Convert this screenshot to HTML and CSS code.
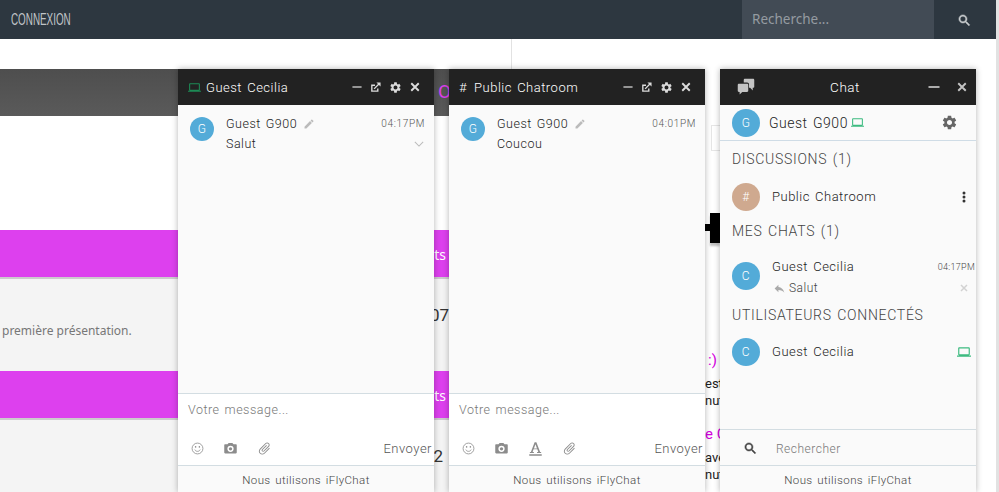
FILE: index.html
```html
<!DOCTYPE html>
<html lang="fr">
<head>
    <meta charset="UTF-8">
    <title>Connexion</title>
    <link rel="stylesheet" href="styles.css">
</head>
<body>
    <!-- icon sprite -->
    <svg class="sprite" xmlns="http://www.w3.org/2000/svg">
        <symbol id="i-gear" viewBox="0 0 24 24"><path d="M19.14 12.94c.04-.3.06-.61.06-.94 0-.32-.02-.64-.07-.94l2.03-1.58c.18-.14.23-.41.12-.61l-1.92-3.32c-.12-.22-.37-.29-.59-.22l-2.39.96c-.5-.38-1.03-.7-1.62-.94l-.36-2.54c-.04-.24-.24-.41-.48-.41h-3.84c-.24 0-.43.17-.47.41l-.36 2.54c-.59.24-1.13.57-1.62.94l-2.39-.96c-.22-.08-.47 0-.59.22L2.74 8.87c-.12.21-.08.47.12.61l2.03 1.58c-.05.3-.09.63-.09.94s.02.64.07.94l-2.03 1.58c-.18.14-.23.41-.12.61l1.92 3.32c.12.22.37.29.59.22l2.39-.96c.5.38 1.03.7 1.62.94l.36 2.54c.05.24.24.41.48.41h3.84c.24 0 .44-.17.47-.41l.36-2.54c.59-.24 1.13-.56 1.62-.94l2.39.96c.22.08.47 0 .59-.22l1.92-3.32c.12-.22.07-.47-.12-.61l-2.01-1.58zM12 15.6c-1.98 0-3.6-1.62-3.6-3.6s1.62-3.6 3.6-3.6 3.6 1.62 3.6 3.6-1.62 3.6-3.6 3.6z" fill="currentColor"/></symbol>
        <symbol id="i-laptop" viewBox="0 0 24 24"><path d="M20 18c1.1 0 1.99-.9 1.99-2L22 6c0-1.1-.9-2-2-2H4c-1.1 0-2 .9-2 2v10c0 1.1.9 2 2 2H0v2h24v-2h-4zM4 6h16v10H4V6z" fill="currentColor"/></symbol>
        <symbol id="i-search" viewBox="0 0 24 24"><path d="M15.5 14h-.79l-.28-.27C15.41 12.59 16 11.11 16 9.5 16 5.91 13.09 3 9.5 3S3 5.91 3 9.5 5.91 16 9.5 16c1.61 0 3.09-.59 4.23-1.57l.27.28v.79l5 4.99L20.49 19l-4.99-5zm-6 0C7.01 14 5 11.99 5 9.5S7.01 5 9.5 5 14 7.01 14 9.5 11.99 14 9.5 14z" fill="currentColor" stroke="currentColor" stroke-width=".8"/></symbol>
        <symbol id="i-camera" viewBox="0 0 24 24"><path fill-rule="evenodd" d="M9 3L7.2 5H3.5C2.7 5 2 5.7 2 6.5v12c0 .8.7 1.5 1.5 1.5h17c.8 0 1.5-.7 1.5-1.5v-12c0-.8-.7-1.5-1.5-1.5h-3.7L15 3H9zm3 14.5a5 5 0 1 1 0-10 5 5 0 0 1 0 10z" fill="currentColor"/><circle cx="12" cy="12.5" r="2.6" fill="currentColor"/></symbol>
        <symbol id="i-pencil" viewBox="0 0 24 24"><path d="M3 17.25V21h3.75L17.81 9.94l-3.75-3.75L3 17.25zM20.71 7.04c.39-.39.39-1.02 0-1.41l-2.34-2.34c-.39-.39-1.02-.39-1.41 0l-1.83 1.83 3.75 3.75 1.83-1.83z" fill="currentColor"/></symbol>
        <symbol id="i-reply" viewBox="0 0 24 24"><path d="M10 9V5l-7 7 7 7v-4.1c5 0 8.5 1.6 11 5.1-1-5-4-10-11-11z" fill="currentColor"/></symbol>
        <symbol id="i-clip" viewBox="0 0 24 24"><path transform="rotate(45 12 12)" d="M16.5 6v11.5c0 2.21-1.79 4-4 4s-4-1.79-4-4V5c0-1.38 1.12-2.5 2.5-2.5s2.5 1.12 2.5 2.5v10.5c0 .55-.45 1-1 1s-1-.45-1-1V6H10v9.5c0 1.38 1.12 2.5 2.5 2.5s2.5-1.12 2.5-2.5V5c0-2.21-1.79-4-4-4S7 2.79 7 5v12.5c0 3.04 2.46 5.5 5.5 5.5s5.5-2.46 5.5-5.5V6h-1.5z" fill="currentColor"/></symbol>
        <symbol id="i-smile" viewBox="0 0 24 24"><g fill="none" stroke="currentColor" stroke-width="1.5"><circle cx="12" cy="12" r="10"/><path d="M7 14c1 2.2 2.8 3.3 5 3.3s4-1.1 5-3.3"/></g><circle cx="8.5" cy="9" r="1.4" fill="currentColor"/><circle cx="15.5" cy="9" r="1.4" fill="currentColor"/></symbol>
        <symbol id="i-font" viewBox="0 0 24 24"><path d="M10.6 2h2.8l6 15.5h1.6V19h-6.5v-1.500h2l-1.500-4.200H8.900l-1.500 4.200h2V19H3v-1.500h1.600L10.600 2zm1.300 3.300L9.500 11.800h4.900L11.900 5.300zM2 21h20v2.500H2z" fill="currentColor"/></symbol>
        <symbol id="i-min" viewBox="0 0 24 24"><path d="M1 12h22" fill="none" stroke="currentColor" stroke-width="3"/></symbol>
        <symbol id="i-close" viewBox="0 0 24 24"><path d="M3 3l18 18M21 3L3 21" fill="none" stroke="currentColor" stroke-width="4.500"/></symbol>
        <symbol id="i-popout" viewBox="0 0 24 24"><path d="M17 14v6H4V7h7" fill="none" stroke="currentColor" stroke-width="3"/><path d="M9 15L20 4" fill="none" stroke="currentColor" stroke-width="3"/><path d="M14 1h9v9z" fill="currentColor"/></symbol>
        <symbol id="i-chevron" viewBox="0 0 24 24"><path d="M2 7l10 10L22 7" fill="none" stroke="currentColor" stroke-width="2.500"/></symbol>
        <symbol id="i-dots" viewBox="0 0 24 24"><circle cx="12" cy="4" r="3" fill="currentColor"/><circle cx="12" cy="12" r="3" fill="currentColor"/><circle cx="12" cy="20" r="3" fill="currentColor"/></symbol>
        <symbol id="i-chats" viewBox="0 0 24 24"><path d="M9 2.500c0-.8.7-1.500 1.500-1.500h11c.8 0 1.500.7 1.500 1.500v9c0 .8-.7 1.500-1.500 1.500H21v3.500L17.500 13H16V8.500C16 7 15 6 13.500 6H9V2.500z" fill="currentColor"/><path d="M1 9c0-.8.7-1.500 1.500-1.500h11c.8 0 1.500.7 1.500 1.500v8c0 .8-.7 1.500-1.500 1.500H7L3.500 22v-3.500h-1C1.700 18.500 1 17.800 1 17V9z" fill="currentColor"/></symbol>
    </svg>

    <div class="page">
        <div class="navbar">
            <a class="nav-link">CONNEXION</a>
            <div class="nav-search">
                <div class="search-field">Recherche...</div>
                <div class="search-btn"><svg class="ico-15"><use href="#i-search"/></svg></div>
            </div>
        </div>

        <div class="content">
            <div class="col-left">
                <div class="title-bar"><span class="title-text">O</span></div>
                <div class="section-head">Sujets</div>
                <div class="section-body">
                    <span class="intro">première présentation.</span>
                    <span class="count">07</span>
                </div>
                <div class="section-head">Sujets</div>
                <div class="section-body section-last">
                    <span class="count count-b">2</span>
                </div>
            </div>
            <div class="col-right">
                <div class="feed">
                    <div class="small-box"></div>
                    <div class="cross"></div>
                    <div class="feed-name feed-first">:)</div>
                    <div class="feed-line feed-gap">est</div>
                    <div class="feed-line">nut</div>
                    <div class="feed-name feed-second">e C</div>
                    <div class="feed-line feed-gap">ave</div>
                    <div class="feed-line">nut</div>
                </div>
            </div>
        </div>
    </div>
    <div class="scrollbar"></div>

    <!-- chat window: Guest Cecilia -->
    <div class="chat-win win-a">
        <div class="chat-head">
            <svg class="ico-13 online-dark"><use href="#i-laptop"/></svg>
            <span class="chat-title">Guest Cecilia</span>
            <div class="head-tools">
                <svg class="ico-10"><use href="#i-min"/></svg>
                <svg class="ico-11"><use href="#i-popout"/></svg>
                <svg class="ico-13"><use href="#i-gear"/></svg>
                <svg class="ico-10"><use href="#i-close"/></svg>
            </div>
        </div>
        <div class="chat-body">
            <div class="msg">
                <div class="avatar av-24">G</div>
                <div class="msg-main">
                    <div class="msg-top">
                        <span class="msg-name">Guest G900</span>
                        <svg class="ico-12 pencil"><use href="#i-pencil"/></svg>
                        <span class="msg-time">04:17PM</span>
                    </div>
                    <div class="msg-bottom">
                        <span class="msg-text">Salut</span>
                        <svg class="ico-10 chevron"><use href="#i-chevron"/></svg>
                    </div>
                </div>
            </div>
        </div>
        <div class="chat-input">
            <div class="placeholder">Votre message...</div>
            <div class="input-tools">
                <svg class="ico-13"><use href="#i-smile"/></svg>
                <svg class="ico-15"><use href="#i-camera"/></svg>
                <svg class="ico-15"><use href="#i-clip"/></svg>
                <span class="send">Envoyer</span>
            </div>
        </div>
        <div class="chat-foot">Nous utilisons iFlyChat</div>
    </div>

    <!-- chat window: Public Chatroom -->
    <div class="chat-win win-b">
        <div class="chat-head">
            <span class="hash">#</span>
            <span class="chat-title">Public Chatroom</span>
            <div class="head-tools">
                <svg class="ico-10"><use href="#i-min"/></svg>
                <svg class="ico-11"><use href="#i-popout"/></svg>
                <svg class="ico-13"><use href="#i-gear"/></svg>
                <svg class="ico-10"><use href="#i-close"/></svg>
            </div>
        </div>
        <div class="chat-body">
            <div class="msg">
                <div class="avatar av-24">G</div>
                <div class="msg-main">
                    <div class="msg-top">
                        <span class="msg-name">Guest G900</span>
                        <svg class="ico-12 pencil"><use href="#i-pencil"/></svg>
                        <span class="msg-time">04:01PM</span>
                    </div>
                    <div class="msg-bottom">
                        <span class="msg-text">Coucou</span>
                    </div>
                </div>
            </div>
        </div>
        <div class="chat-input">
            <div class="placeholder">Votre message...</div>
            <div class="input-tools">
                <svg class="ico-13"><use href="#i-smile"/></svg>
                <svg class="ico-15"><use href="#i-camera"/></svg>
                <svg class="ico-15"><use href="#i-font"/></svg>
                <svg class="ico-15"><use href="#i-clip"/></svg>
                <span class="send">Envoyer</span>
            </div>
        </div>
        <div class="chat-foot">Nous utilisons iFlyChat</div>
    </div>

    <!-- main chat list -->
    <div class="chat-win win-c">
        <div class="chat-head list-head">
            <svg class="ico-18"><use href="#i-chats"/></svg>
            <span class="list-title">Chat</span>
            <svg class="ico-12 list-min"><use href="#i-min"/></svg>
            <svg class="ico-10 list-close"><use href="#i-close"/></svg>
        </div>
        <div class="list-body">
            <div class="me-row">
                <div class="avatar av-28">G</div>
                <span class="me-name">Guest G900</span>
                <svg class="ico-13 online"><use href="#i-laptop"/></svg>
                <svg class="ico-17 me-gear"><use href="#i-gear"/></svg>
            </div>
            <div class="list-label label-first">DISCUSSIONS (1)</div>
            <div class="list-row row-room">
                <div class="avatar av-28 av-room">#</div>
                <span class="row-name">Public Chatroom</span>
                <svg class="ico-12 dots"><use href="#i-dots"/></svg>
            </div>
            <div class="list-label label-chats">MES CHATS (1)</div>
            <div class="list-row row-chat">
                <div class="avatar av-28">C</div>
                <div class="row-main">
                    <div class="row-top">
                        <span class="row-name">Guest Cecilia</span>
                        <span class="row-time">04:17PM</span>
                    </div>
                    <div class="row-bottom">
                        <svg class="ico-13 reply"><use href="#i-reply"/></svg>
                        <span class="row-last">Salut</span>
                        <svg class="ico-8 row-x"><use href="#i-close"/></svg>
                    </div>
                </div>
            </div>
            <div class="list-label label-users">UTILISATEURS CONNECTÉS</div>
            <div class="list-row row-user">
                <div class="avatar av-28">C</div>
                <span class="row-name">Guest Cecilia</span>
                <svg class="ico-14 online user-online"><use href="#i-laptop"/></svg>
            </div>
        </div>
        <div class="list-search">
            <svg class="ico-15 search-ico"><use href="#i-search"/></svg>
            <span class="search-hint">Rechercher</span>
        </div>
        <div class="chat-foot">Nous utilisons iFlyChat</div>
    </div>
</body>
</html>
```

FILE: styles.css
```css
* {
    box-sizing: border-box;
}

html, body {
    margin: 0;
    height: 492px;
    overflow: hidden;
}

body {
    display: flex;
    font-family: Roboto, "Liberation Sans", sans-serif;
    background-color: #fff;
}

.sprite {
    display: none;
}

svg {
    display: block;
    flex: none;
}

.ico-8 { width: 8px; height: 8px; }
.ico-10 { width: 10px; height: 10px; }
.ico-11 { width: 11px; height: 11px; }
.ico-12 { width: 12px; height: 12px; }
.ico-13 { width: 13px; height: 13px; }
.ico-14 { width: 14px; height: 14px; }
.ico-15 { width: 15px; height: 15px; }
.ico-17 { width: 17px; height: 17px; }
.ico-18 { width: 18px; height: 18px; }

.page {
    flex: 1;
    min-width: 0;
}

.scrollbar {
    width: 3px;
    background-color: #e2e2e2;
}

/* navbar */
.navbar {
    display: flex;
    justify-content: space-between;
    height: 39px;
    background-color: #2d3740;
}

.nav-link {
    display: block;
    margin-left: 11px;
    line-height: 39px;
    font-family: "Liberation Sans", sans-serif;
    font-size: 17px;
    color: #c0c4c8;
    transform: scaleX(.58);
    transform-origin: left center;
}

.nav-search {
    display: flex;
}

.search-field {
    width: 192px;
    padding-left: 10px;
    line-height: 39px;
    font-family: "Noto Sans", sans-serif;
    font-size: 13.5px;
    color: #959ba1;
    background-color: #424b55;
}

.search-btn {
    display: flex;
    align-items: center;
    padding: 2px 0 0 23px;
    width: 62px;
    color: #c9ccce;
}

/* page behind the chat windows */
.content {
    display: flex;
    height: 453px;
}

.col-left {
    flex: none;
    width: 460px;
    padding-top: 30px;
}

.title-bar {
    height: 47px;
    margin-bottom: 114px;
    padding: 13px 0 0 438px;
    background: linear-gradient(#4e4e4e, #5a5a5a);
}

.title-text {
    font-size: 19px;
    line-height: 20px;
    color: #dd40ee;
}

.section-head {
    height: 49px;
    padding: 15px 14px 0 0;
    text-align: right;
    font-family: "Noto Sans", sans-serif;
    font-size: 14px;
    color: #fff;
    background-color: #dd40ee;
    border-bottom: 2px solid #ccc;
}

.section-body {
    display: flex;
    justify-content: space-between;
    align-items: flex-start;
    height: 92px;
    padding: 26px 11px 0 2px;
    background-color: #f4f4f4;
}

.section-last {
    height: 80px;
    justify-content: flex-end;
    padding: 26px 17px 0 0;
}

.intro {
    margin-top: 16px;
    font-family: "Noto Sans", sans-serif;
    font-size: 12px;
    line-height: 20px;
    color: #777;
}

.count {
    font-size: 17px;
    line-height: 20px;
    color: #333;
}

.col-right {
    flex: 1;
    margin-left: 51px;
    border-left: 1px solid #e2e2e2;
    height: 30px;
}

.feed {
    width: 200px;
    margin-left: 193px;
    padding-top: 86px;
}

.small-box {
    width: 100px;
    height: 26px;
    margin-left: 6px;
    border: 1px solid #e6e6e6;
}

.cross {
    position: relative;
    width: 10px;
    height: 30px;
    margin: 62px 0 0 5px;
    background-color: #000;
    box-shadow: 0 3px 2px rgba(0, 0, 0, .25);
}

.cross::before {
    content: "";
    position: absolute;
    top: 11px;
    left: -5px;
    width: 5px;
    height: 7px;
    background-color: #000;
}

.feed-name {
    font-size: 15px;
    line-height: 18px;
    color: #d400e0;
}

.feed-first {
    margin-top: 108px;
    padding-left: 3px;
}

.feed-second {
    margin-top: 16px;
}

.feed-line {
    font-size: 13px;
    line-height: 17px;
    color: #222;
}

.feed-gap {
    margin-top: 6px;
}

/* chat windows */
.chat-win {
    position: absolute;
    top: 69px;
    display: flex;
    flex-direction: column;
    width: 256px;
    height: 423px;
    background-color: #fafafa;
    box-shadow: 0 0 6px rgba(0, 0, 0, .3);
    font-weight: 300;
    letter-spacing: .5px;
    word-spacing: 1.5px;
}

.win-a { left: 178px; }
.win-b { left: 449px; }
.win-c { left: 720px; }

.chat-head {
    display: flex;
    align-items: center;
    flex: none;
    height: 36px;
    padding: 0 14px 0 10px;
    color: #dcdcdc;
    background-color: #222;
}

.online-dark {
    color: #1d8a55;
}

.online {
    color: #3dbb80;
}

.hash {
    font-size: 13px;
    margin-right: 7px;
    color: #fff;
}

.chat-title {
    margin-left: 5px;
    font-size: 13px;
    color: #fff;
}

.win-b .chat-title {
    margin-left: 0;
}

.head-tools {
    display: flex;
    align-items: center;
    gap: 8px;
    margin-left: auto;
}

.chat-body {
    flex: 1;
    padding: 12px 9px 0 12px;
}

.msg {
    display: flex;
}

.avatar {
    flex: none;
    display: flex;
    align-items: center;
    justify-content: center;
    border-radius: 50%;
    color: #fff;
    background-color: #53abd8;
}

.av-24 {
    width: 24px;
    height: 24px;
    font-size: 12px;
}

.av-28 {
    width: 28px;
    height: 28px;
    font-size: 12px;
}

.av-room {
    background-color: #cfa98f;
}

.msg-main {
    flex: 1;
    margin-left: 12px;
}

.msg-top,
.msg-bottom {
    display: flex;
    align-items: center;
}

.msg-top {
    height: 13px;
}

.msg-bottom {
    height: 13px;
    margin-top: 7px;
}

.msg-name,
.msg-text {
    font-size: 12.500px;
    color: #222;
}

.pencil {
    margin-left: 6px;
    color: #bbb;
}

.msg-time {
    margin-left: auto;
    font-size: 10px;
    letter-spacing: .65px;
    color: #555;
}

.chevron {
    margin-left: auto;
    margin-right: 1px;
    color: #bbb;
}

.chat-input {
    flex: none;
    height: 72px;
    background-color: #fff;
    border-top: 1px solid #d3dde2;
}

.placeholder {
    padding: 8px 0 0 10px;
    font-size: 12.500px;
    line-height: 15px;
    color: #777;
}

.input-tools {
    display: flex;
    align-items: center;
    gap: 19px;
    height: 16px;
    margin-top: 23px;
    padding: 0 2px 0 13px;
    color: #8c8c8c;
}

.send {
    margin-left: auto;
    font-size: 13px;
    color: #555;
}

.chat-foot {
    flex: none;
    height: 27px;
    line-height: 29px;
    text-align: center;
    font-size: 11.500px;
    letter-spacing: .4px;
    color: #444;
    border-top: 1px solid #d3dde2;
}

/* chat list */
.list-head {
    padding: 0 9px 0 17px;
    color: #c4c4c4;
}

.list-title {
    position: absolute;
    left: 0;
    right: 6px;
    text-align: center;
    font-size: 13.500px;
    color: #fff;
}

.list-min {
    margin-left: auto;
    color: #dcdcdc;
}

.list-close {
    margin-left: 17px;
}

.list-body {
    flex: 1;
}

.me-row {
    display: flex;
    align-items: center;
    height: 36px;
    padding: 0 18px 0 12px;
    border-bottom: 1px solid #cfdce6;
}

.me-name {
    margin: 0 3px 0 9px;
    font-size: 14px;
    color: #222;
}

.me-gear {
    margin-left: auto;
    color: #666;
}

.list-label {
    padding-left: 12px;
    font-size: 14px;
    line-height: 18px;
    letter-spacing: .7px;
    color: #444;
}

.label-first { margin-top: 9px; }
.label-chats { margin-top: 11px; }
.label-users { margin-top: 11px; }

.list-row {
    display: flex;
    align-items: center;
    padding: 0 0 0 12px;
}

.row-room {
    height: 28px;
    margin-top: 15px;
    padding-right: 6px;
}

.row-chat {
    margin-top: 16px;
}

.row-user {
    height: 28px;
    margin-top: 14px;
    padding-right: 5px;
}

.row-name {
    margin: 0 0 2px 12px;
    font-size: 13px;
    color: #222;
}

.dots {
    margin-left: auto;
    color: #333;
}

.user-online {
    margin-left: auto;
}

.row-main {
    flex: 1;
    margin-left: 12px;
    padding-top: 3px;
}

.row-main .row-name {
    margin: 0;
}

.row-top,
.row-bottom {
    display: flex;
    align-items: center;
}

.row-top {
    height: 15px;
    padding-right: 1px;
}

.row-bottom {
    height: 14px;
    margin-top: 7px;
    padding: 0 8px 0 1px;
}

.row-time {
    margin-left: auto;
    font-size: 9px;
    letter-spacing: .3px;
    color: #444;
}

.reply {
    color: #aaa;
}

.row-last {
    margin-left: 3px;
    font-size: 12px;
    color: #444;
}

.row-x {
    margin-left: auto;
    color: #d2d2d2;
}

.list-search {
    display: flex;
    align-items: center;
    flex: none;
    height: 36px;
    padding: 2px 0 0 23px;
    border-top: 1px solid #d3dde2;
}

.search-ico {
    color: #444;
}

.search-hint {
    margin-left: 18px;
    font-size: 12px;
    color: #777;
}
```
